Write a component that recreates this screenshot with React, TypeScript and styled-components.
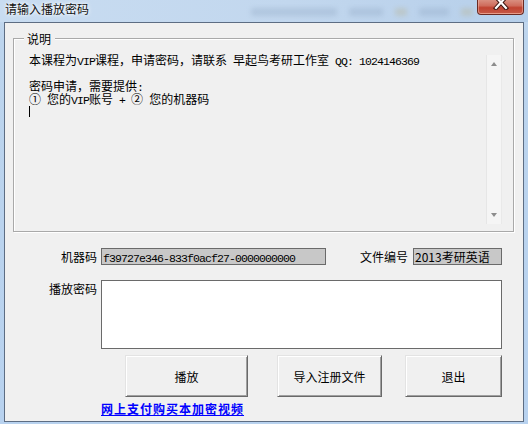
import React from "react";
import styled, { createGlobalStyle } from "styled-components";

const CJK = `"Noto Sans CJK SC", "Noto Sans", sans-serif`;
const MONO = `"Liberation Mono", "DejaVu Sans Mono", monospace`;

const Global = createGlobalStyle`
  html, body {
    margin: 0;
    padding: 0;
    width: 528px;
    height: 424px;
    overflow: hidden;
    background: #b9d2ee;
    font-family: ${CJK};
  }
  * { box-sizing: border-box; }
`;

const Window = styled.div`
  width: 528px;
  height: 424px;
  display: flex;
  flex-direction: column;
  background: linear-gradient(to bottom, #c5d9ef 0px, #bcd4ed 40px, #b8d2ef 100%);
`;

const TitleBar = styled.div`
  height: 22px;
  display: flex;
  align-items: flex-start;
  padding: 0 4px 0 5px;
  background: linear-gradient(to right, #c8dcf1 0%, #c2d7ee 55%, #b6cfea 100%);
`;

const TitleText = styled.div`
  font-size: 12px;
  line-height: 16px;
  margin-top: 1px;
  color: #111;
  text-shadow: 0 0 5px #fff, 0 0 3px #fff;
`;

const Ghosts = styled.div`
  margin-left: auto;
  margin-right: 4px;
  margin-top: 8px;
  display: flex;
  align-items: center;
  gap: 12px;
  filter: blur(2.5px);
  opacity: 0.35;
`;

const Ghost = styled.div<{ $w: number; $c?: string }>`
  width: ${(p) => p.$w}px;
  height: 8px;
  border-radius: 2px;
  background: ${(p) => p.$c ?? "#8fa6c2"};
`;

const CloseButton = styled.div`
  width: 47px;
  height: 15px;
  border: 1px solid #6b2a22;
  border-top: none;
  border-radius: 0 0 4px 4px;
  background: linear-gradient(
    to bottom,
    #d98f80 0%,
    #cf6d5d 40%,
    #c14432 55%,
    #c65a48 100%
  );
  box-shadow: inset 0 -1px 0 rgba(255, 200, 180, 0.6), inset 1px 0 0 rgba(255, 210, 200, 0.4),
    inset -1px 0 0 rgba(255, 210, 200, 0.4);
  display: flex;
  justify-content: center;
  align-items: flex-start;
`;

const Client = styled.div`
  margin: 0 4px 2px 4px;
  height: 400px;
  border: 1px solid #5d6d83;
  background: #f0f0f0;
  display: flex;
  flex-direction: column;
`;

const Group = styled.div`
  position: relative;
  margin: 15px 9px 0 8px;
  height: 194px;
  border: 1px solid #a9a9a9;
  box-shadow: inset 1px 1px 0 #fff, 1px 1px 0 #fff;
  padding: 14px 11px 5px 10px;
`;

const Legend = styled.div`
  position: absolute;
  top: -8px;
  left: 10px;
  padding: 0 4px 0 3px;
  background: #f0f0f0;
  font-size: 12px;
  line-height: 15px;
  color: #000;
`;

const Memo = styled.div`
  height: 172px;
  display: flex;
`;

const MemoText = styled.div`
  flex: 1;
  padding-left: 5px;
  font-size: 12px;
  color: #000;
`;

const Line = styled.div`
  height: 13px;
  line-height: 13px;
  white-space: pre;
`;

const Latin = styled.span`
  font-family: ${MONO};
  font-size: 11.5px;
  letter-spacing: -0.9px;
`;

const Caret = styled.div`
  width: 1px;
  height: 11px;
  margin-top: 1px;
  background: #000;
`;

const ScrollBar = styled.div`
  width: 16px;
  margin: 2px 0 1px;
  background: #f5f5f5;
  border-left: 1px solid #e6e6e6;
  border-right: 1px solid #e9e9e9;
  display: flex;
  flex-direction: column;
  justify-content: space-between;
  align-items: center;
  padding: 7px 0 7px;
`;

const Arrow = styled.div<{ $dir: "up" | "down" }>`
  width: 0;
  height: 0;
  border-left: 3.5px solid transparent;
  border-right: 3.5px solid transparent;
  ${(p) =>
    p.$dir === "up"
      ? "border-bottom: 4px solid #8c8c8c;"
      : "border-top: 4px solid #8c8c8c;"}
`;

const FormRow = styled.div<{ $mt: number; $h?: number }>`
  display: grid;
  grid-template-columns: 92px 1fr;
  column-gap: 4px;
  margin-top: ${(p) => p.$mt}px;
  padding-right: 21px;
  ${(p) => (p.$h ? `height: ${p.$h}px;` : "")}
`;

const Label = styled.div<{ $top?: boolean }>`
  font-size: 12px;
  line-height: 16px;
  color: #000;
  text-align: right;
  white-space: nowrap;
  align-self: ${(p) => (p.$top ? "start" : "center")};
  margin-top: ${(p) => (p.$top ? "1px" : "0")};
`;

const FieldLine = styled.div`
  display: flex;
  align-items: center;
`;

const ReadField = styled.div<{ $w: number }>`
  width: ${(p) => p.$w}px;
  height: 17px;
  border: 1px solid #6a6a6a;
  background: #c8c8c8;
  padding-left: 1px;
  font-size: 12px;
  line-height: 15px;
  color: #000;
  white-space: nowrap;
  overflow: hidden;
`;

const FileGroup = styled.div`
  margin-left: auto;
  display: flex;
  align-items: center;
  gap: 5px;
`;

const PasswordBox = styled.div`
  height: 69px;
  border: 1px solid #6a6a6a;
  background: #fff;
`;

const ButtonRow = styled.div`
  display: flex;
  padding-left: 24px;
`;

const Button = styled.div<{ $w: number; $ml?: number }>`
  width: ${(p) => p.$w}px;
  height: 42px;
  margin-left: ${(p) => p.$ml ?? 0}px;
  border: 1px solid;
  border-color: #e3e3e3 #696969 #696969 #e3e3e3;
  box-shadow: inset 1px 1px 0 #fff, inset -1px -1px 0 #a0a0a0;
  background: #f0f0f0;
  display: flex;
  align-items: center;
  justify-content: center;
  font-size: 12px;
  color: #000;
`;

const Link = styled.a`
  font-size: 12px;
  font-weight: bold;
  line-height: 14px;
  letter-spacing: 1px;
  color: #0000ff;
  text-decoration: underline;
  white-space: nowrap;
  cursor: pointer;
`;

const Empty = styled.div``;

export default function App() {
  return (
    <>
      <Global />
      <Window>
        <TitleBar>
          <TitleText>请输入播放密码</TitleText>
          <Ghosts>
            <Ghost $w={86} />
            <Ghost $w={34} />
            <Ghost $w={12} $c="#b9b08a" />
            <Ghost $w={30} />
            <Ghost $w={12} $c="#b9b08a" />
          </Ghosts>
          <CloseButton>
            <svg width="20" height="10" viewBox="0 0 20 10">
              <path
                d="M5 -3 L15 8 M15 -3 L5 8"
                stroke="#3b1510"
                strokeWidth="4.2"
                strokeLinecap="square"
                fill="none"
              />
              <path
                d="M5 -3 L15 8 M15 -3 L5 8"
                stroke="#ffffff"
                strokeWidth="2.2"
                strokeLinecap="square"
                fill="none"
              />
            </svg>
          </CloseButton>
        </TitleBar>
        <Client>
          <Group>
            <Legend>说明</Legend>
            <Memo>
              <MemoText>
                <Line>
                  本课程为<Latin>VIP</Latin>课程，申请密码，请联系<Latin> </Latin>
                  早起鸟考研工作室<Latin> QQ: 1024146369</Latin>
                </Line>
                <Line />
                <Line>
                  密码申请，需要提供<Latin>:</Latin>
                </Line>
                <Line>
                  ①<Latin> </Latin>您的<Latin>VIP</Latin>账号<Latin> + </Latin>②
                  <Latin> </Latin>您的机器码
                </Line>
                <Caret />
              </MemoText>
              <ScrollBar>
                <Arrow $dir="up" />
                <Arrow $dir="down" />
              </ScrollBar>
            </Memo>
          </Group>

          <FormRow $mt={16} $h={17}>
            <Label>机器码</Label>
            <FieldLine>
              <ReadField $w={225}>
                <Latin>f39727e346-833f0acf27-0000000000</Latin>
              </ReadField>
              <FileGroup>
                <Label>文件编号</Label>
                <ReadField $w={89}>2013考研英语</ReadField>
              </FileGroup>
            </FieldLine>
          </FormRow>

          <FormRow $mt={15}>
            <Label $top>播放密码</Label>
            <PasswordBox />
          </FormRow>

          <FormRow $mt={6}>
            <Empty />
            <ButtonRow>
              <Button $w={123}>播放</Button>
              <Button $w={105} $ml={29}>
                导入注册文件
              </Button>
              <Button $w={97} $ml={23}>
                退出
              </Button>
            </ButtonRow>
          </FormRow>

          <FormRow $mt={5}>
            <Empty />
            <FieldLine>
              <Link>网上支付购买本加密视频</Link>
            </FieldLine>
          </FormRow>
        </Client>
      </Window>
    </>
  );
}
